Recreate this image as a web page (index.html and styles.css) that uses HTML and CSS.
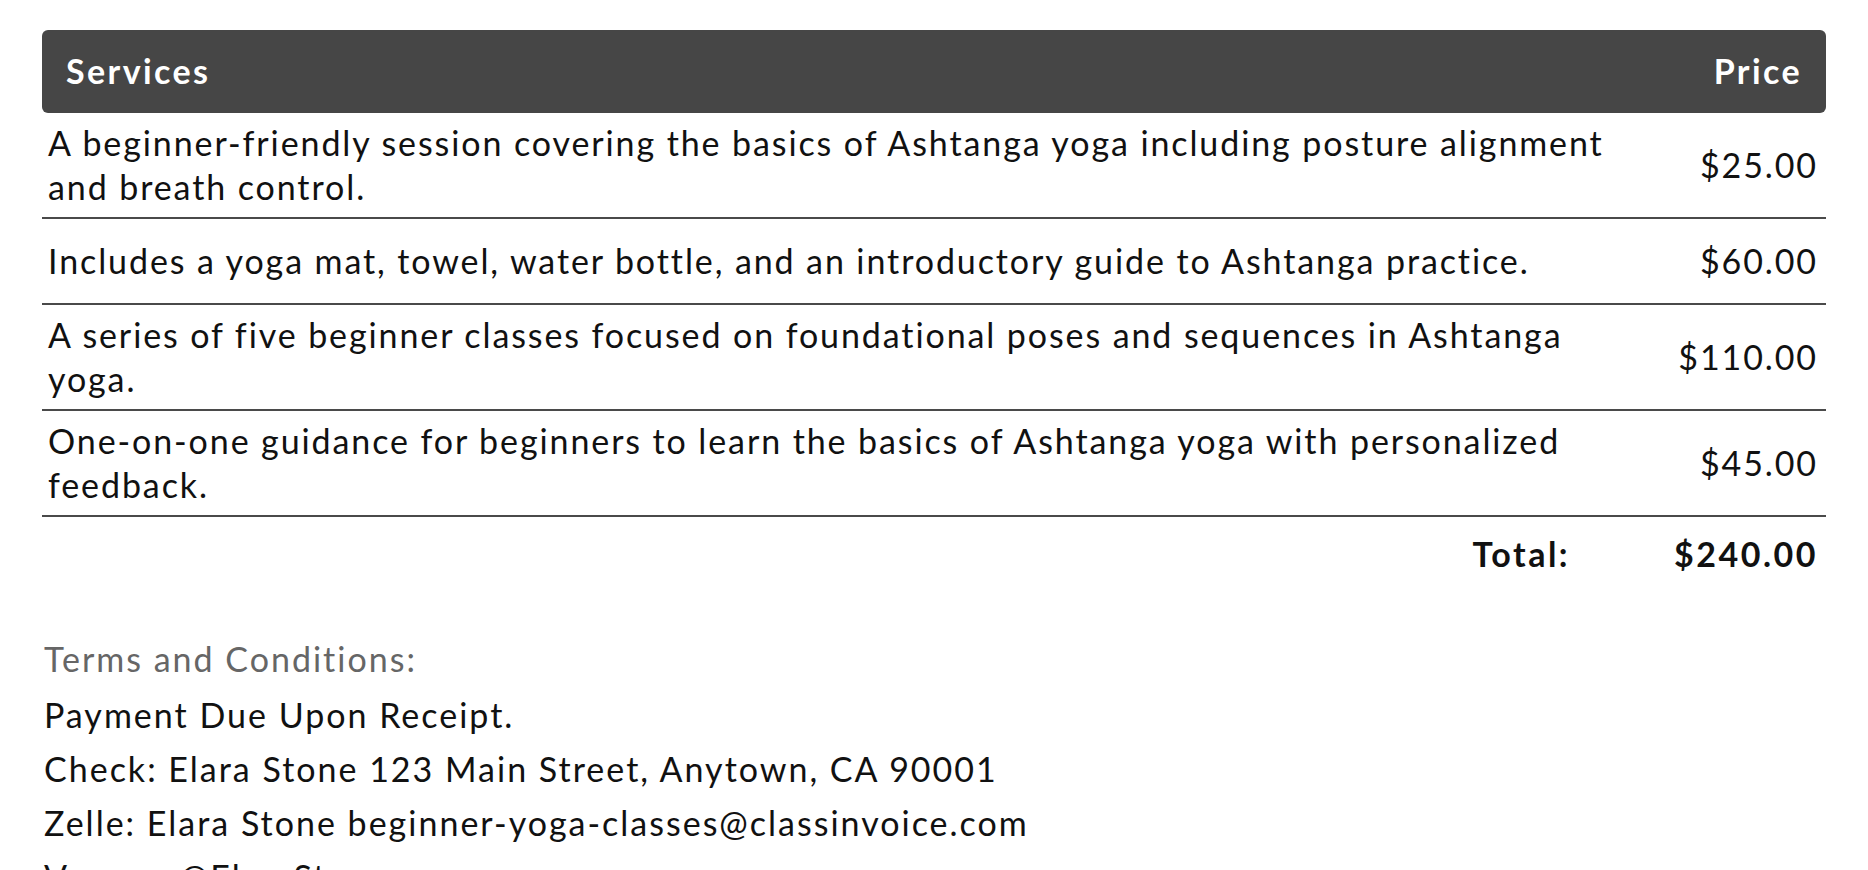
FILE: index.html
```html
<!DOCTYPE html>
<html lang="en">
<head>
<meta charset="utf-8">
<title>Invoice</title>
<link rel="stylesheet" href="styles.css">
</head>
<body>
<div class="page">
  <table class="items">
    <thead>
      <tr>
        <th class="col-desc">Services</th>
        <th class="col-price">Price</th>
      </tr>
    </thead>
    <tbody>
      <tr>
        <td class="desc">A beginner-friendly session covering the basics of Ashtanga yoga including posture alignment and breath control.</td>
        <td class="price">$25.00</td>
      </tr>
      <tr>
        <td class="desc">Includes a yoga mat, towel, water bottle, and an introductory guide to Ashtanga practice.</td>
        <td class="price">$60.00</td>
      </tr>
      <tr>
        <td class="desc">A series of five beginner classes focused on foundational poses and sequences in Ashtanga yoga.</td>
        <td class="price">$110.00</td>
      </tr>
      <tr>
        <td class="desc">One-on-one guidance for beginners to learn the basics of Ashtanga yoga with personalized feedback.</td>
        <td class="price">$45.00</td>
      </tr>
    </tbody>
  </table>
  <div class="total">
    <span class="total-label">Total:</span>
    <span class="total-amount">$240.00</span>
  </div>
  <div class="terms">
    <p class="terms-title">Terms and Conditions:</p>
    <p class="terms-line">Payment Due Upon Receipt.</p>
    <p class="terms-line">Check: Elara Stone 123 Main Street, Anytown, CA 90001</p>
    <p class="terms-line">Zelle: Elara Stone beginner-yoga-classes@classinvoice.com</p>
    <p class="terms-line">Venmo: @ElaraStone</p>
  </div>
</div>
</body>
</html>
```

FILE: styles.css
```css
* { box-sizing: border-box; }

html, body {
  margin: 0;
  padding: 0;
  background: #ffffff;
}

body {
  font-family: Lato, "Liberation Sans", sans-serif;
  font-size: 34px;
  line-height: 44px;
  letter-spacing: 1.9px;
  color: #111111;
  overflow: hidden;
}

.page {
  padding: 30px 42px 0 42px;
}

.items {
  width: 100%;
  border-collapse: separate;
  border-spacing: 0;
}

.items th {
  background: #464646;
  color: #ffffff;
  font-weight: 700;
  letter-spacing: 2.4px;
  padding: 19px 24px 20px 24px;
  line-height: 44px;
}

.items th.col-desc {
  text-align: left;
  border-radius: 6px 0 0 6px;
}

.items th.col-price {
  text-align: right;
  border-radius: 0 6px 6px 0;
  width: 195px;
}

.items td {
  border-bottom: 2px solid #4a4a4a;
  vertical-align: middle;
}

.items td.desc {
  padding: 8px 6px 8px 6px;
  text-align: left;
}

.items td.price {
  padding: 20px 8px 20px 8px;
  text-align: right;
  white-space: nowrap;
}

.total {
  display: flex;
  justify-content: flex-end;
  align-items: center;
  gap: 104px;
  padding: 15px 8px 15px 0;
  font-weight: 700;
  letter-spacing: 2.5px;
}

.terms {
  margin-top: 46px;
  padding-left: 2px;
  letter-spacing: 2px;
}

.terms p {
  margin: 0 0 10px 0;
}

.terms-title {
  color: #666666;
  margin-bottom: 12px !important;
}
```
